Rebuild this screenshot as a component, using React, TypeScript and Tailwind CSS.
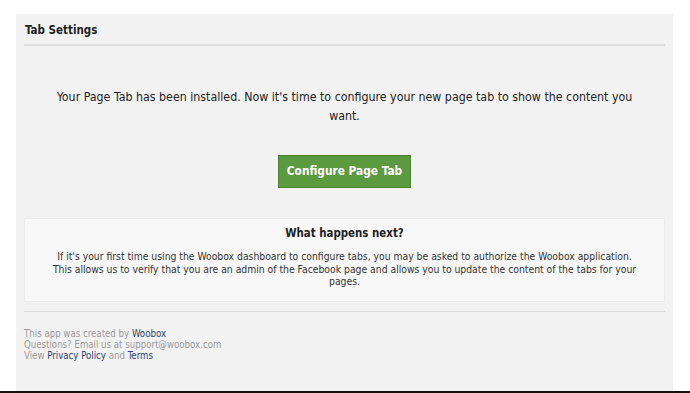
export default function App() {
  return (
    <div className="relative w-[690px] h-[393px] bg-white overflow-hidden" style={{ fontFamily: '"DejaVu Sans Condensed", "DejaVu Sans", sans-serif' }}>
      <div className="ml-4 mt-[14px] w-[657px] h-[377px] bg-[#f2f2f2] px-2">
        <div className="pt-[8px] pb-[6px] border-b-2 border-[#dedede]">
          <h2 className="text-[11.5px] font-bold text-[#222] leading-[16px] pl-[1px]">Tab Settings</h2>
        </div>

        <p className="mt-[42px] px-[28px] text-center text-[12.3px] leading-[19px] text-[#222]">
          Your Page Tab has been installed. Now it's time to configure your new page tab to show the content you want.
        </p>

        <div className="flex justify-center mt-[29px]">
          <button className="h-[33px] px-[8px] bg-[#5c9a40] border border-[#4a8431] text-white text-[11.8px] font-bold">
            Configure Page Tab
          </button>
        </div>

        <div className="mt-[30px] bg-[#f8f8f8] border border-[#ececec] pt-[6px] pb-[13px] px-[23px] text-center">
          <h3 className="text-[11.4px] font-bold text-[#222] leading-[16px]">What happens next?</h3>
          <p className="mt-[9px] text-[10.3px] leading-[12.5px] text-[#333]">
            If it's your first time using the Woobox dashboard to configure tabs, you may be asked to authorize the Woobox application.
            <br />
            This allows us to verify that you are an admin of the Facebook page and allows you to update the content of the tabs for your pages.
          </p>
        </div>

        <div className="mt-[9px] border-t border-[#dadada] pt-[16px] text-[9.6px] leading-[11px] text-[#9a9a9a]">
          <p>This app was created by <span className="text-[#2e3f6e]">Woobox</span></p>
          <p>Questions? Email us at support@woobox.com</p>
          <p>View <span className="text-[#2e3f6e]">Privacy Policy</span> and <span className="text-[#2e3f6e]">Terms</span></p>
        </div>
      </div>
      <div className="absolute left-0 right-0 bottom-0 h-[2px] bg-[#111]" />
    </div>
  )
}
